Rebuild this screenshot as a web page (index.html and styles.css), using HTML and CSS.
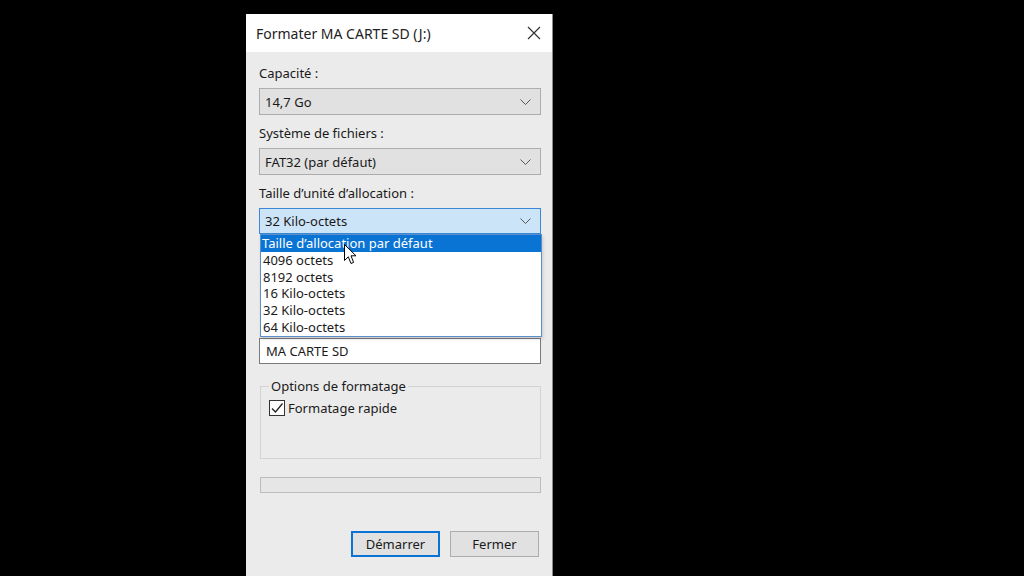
FILE: index.html
```html
<!DOCTYPE html>
<html lang="fr">
<head>
  <meta charset="UTF-8">
  <title>Formater MA CARTE SD (J:)</title>
  <link rel="stylesheet" href="styles.css">
</head>
<body>
  <div class="dialog">
    <!-- Barre de titre -->
    <div class="titlebar">
      <span class="title">Formater MA CARTE SD (J:)</span>
      <svg class="close" width="14" height="14" viewBox="0 0 14 14">
        <path d="M1 1 L13 13 M13 1 L1 13" stroke="#333" stroke-width="1.2" fill="none"/>
      </svg>
    </div>

    <div class="content">
      <label class="label first">Capacité :</label>
      <div class="combo">
        <span>14,7 Go</span>
        <svg class="chevron" width="11" height="6" viewBox="0 0 11 6"><path d="M0.5 0.5 L5.5 5.5 L10.5 0.5" stroke="#555" fill="none"/></svg>
      </div>

      <label class="label">Système de fichiers :</label>
      <div class="combo">
        <span>FAT32 (par défaut)</span>
        <svg class="chevron" width="11" height="6" viewBox="0 0 11 6"><path d="M0.5 0.5 L5.5 5.5 L10.5 0.5" stroke="#555" fill="none"/></svg>
      </div>

      <label class="label">Taille d’unité d’allocation :</label>
      <div class="combo-wrap">
        <div class="combo open">
          <span>32 Kilo-octets</span>
          <svg class="chevron" width="11" height="6" viewBox="0 0 11 6"><path d="M0.5 0.5 L5.5 5.5 L10.5 0.5" stroke="#555" fill="none"/></svg>
        </div>

        <!-- Liste déroulante ouverte -->
        <ul class="dropdown">
          <li class="selected">Taille d’allocation par défaut</li>
          <li>4096 octets</li>
          <li>8192 octets</li>
          <li>16 Kilo-octets</li>
          <li>32 Kilo-octets</li>
          <li>64 Kilo-octets</li>
        </ul>

        <svg class="cursor" width="13" height="21" viewBox="0 0 13 21">
          <path d="M0.5 0.5 L0.5 16.5 L4.3 12.8 L7 19.5 L9.6 18.4 L7 11.8 L12 11.8 Z" fill="#fff" stroke="#000" stroke-width="1"/>
        </svg>
      </div>

      <!-- Zone cachée par la liste -->
      <div class="spacer"></div>

      <div class="textbox">MA CARTE SD</div>

      <!-- Options de formatage -->
      <fieldset class="options">
        <legend>Options de formatage</legend>
        <div class="check-row">
          <span class="checkbox">
            <svg width="14" height="14" viewBox="0 0 14 14"><path d="M2 7.5 L5.5 11 L12.5 2.5" stroke="#222" stroke-width="1.3" fill="none"/></svg>
          </span>
          <span>Formatage rapide</span>
        </div>
      </fieldset>

      <div class="progress"></div>

      <!-- Boutons -->
      <div class="buttons">
        <button class="btn default">Démarrer</button>
        <button class="btn">Fermer</button>
      </div>
    </div>
  </div>
</body>
</html>
```

FILE: styles.css
```css
/* Styles généraux */
* {
  margin: 0;
  padding: 0;
  box-sizing: border-box;
}

body {
  background-color: #000;
  font-family: "Noto Sans", "Open Sans", sans-serif;
  font-size: 13px;
  color: #1a1a1a;
  height: 576px;
  overflow: hidden;
}

.dialog {
  width: 307px;
  height: 562px;
  margin: 14px 0 0 246px;
  background-color: #ebebeb;
  border-right: 1px solid #8a8a8a;
  display: flex;
  flex-direction: column;
}

/* Barre de titre */
.titlebar {
  height: 38px;
  background-color: #fff;
  display: flex;
  align-items: center;
  justify-content: space-between;
  padding: 0 11px 0 10px;
}

.title {
  font-size: 14px;
  color: #222;
}

.close {
  display: block;
}

/* Contenu */
.content {
  padding: 0 11px 0 13px;
}

.label {
  display: block;
  height: 16px;
  line-height: 16px;
  margin-top: 10px;
  margin-bottom: 7px;
}

.label.first {
  margin-top: 13px;
}

.combo {
  height: 27px;
  background-color: #e1e1e1;
  border: 1px solid #adadad;
  display: flex;
  align-items: center;
  justify-content: space-between;
  padding: 0 9px 0 5px;
}

.combo.open {
  height: 26px;
  background-color: #cce4f7;
  border-color: #3a88d4;
}

.combo-wrap {
  position: relative;
}

.dropdown {
  position: absolute;
  left: 1px;
  top: 26px;
  width: 282px;
  list-style: none;
  background-color: #fff;
  border: 1px solid #5a8fcc;
  box-shadow: 1px 2px 3px rgba(0, 0, 0, 0.15);
  z-index: 2;
}

.dropdown li {
  height: 16.8px;
  line-height: 16.8px;
  padding-left: 2px;
}

.dropdown li.selected {
  background-color: #0a74d4;
  color: #fff;
  padding-left: 1px;
}

.cursor {
  position: absolute;
  left: 85px;
  top: 36px;
  z-index: 3;
}

.spacer {
  height: 104px;
}

.textbox {
  height: 26px;
  background-color: #fff;
  border: 1px solid #7a7a7a;
  line-height: 24px;
  padding-left: 6px;
}

/* Options de formatage */
.options {
  margin: 14px 0 0 1px;
  height: 81px;
  border: 1px solid #d3d3d3;
  padding: 0 8px;
}

.options legend {
  padding: 0 2px;
  line-height: 16px;
}

.check-row {
  display: flex;
  align-items: center;
  gap: 3px;
  margin-top: 5px;
}

.checkbox {
  width: 16px;
  height: 16px;
  border: 1px solid #333;
  background-color: #fff;
  display: flex;
  align-items: center;
  justify-content: center;
}

.progress {
  margin: 18px 0 0 1px;
  height: 16px;
  background-color: #e6e6e6;
  border: 1px solid #bcbcbc;
}

/* Boutons */
.buttons {
  display: flex;
  justify-content: flex-end;
  gap: 10px;
  margin-top: 38px;
  padding-right: 2px;
}

.btn {
  width: 89px;
  height: 26px;
  font: inherit;
  color: #1a1a1a;
  background-color: #e1e1e1;
  border: 1px solid #adadad;
}

.btn.default {
  border: 2px solid #0a74d4;
}
```
